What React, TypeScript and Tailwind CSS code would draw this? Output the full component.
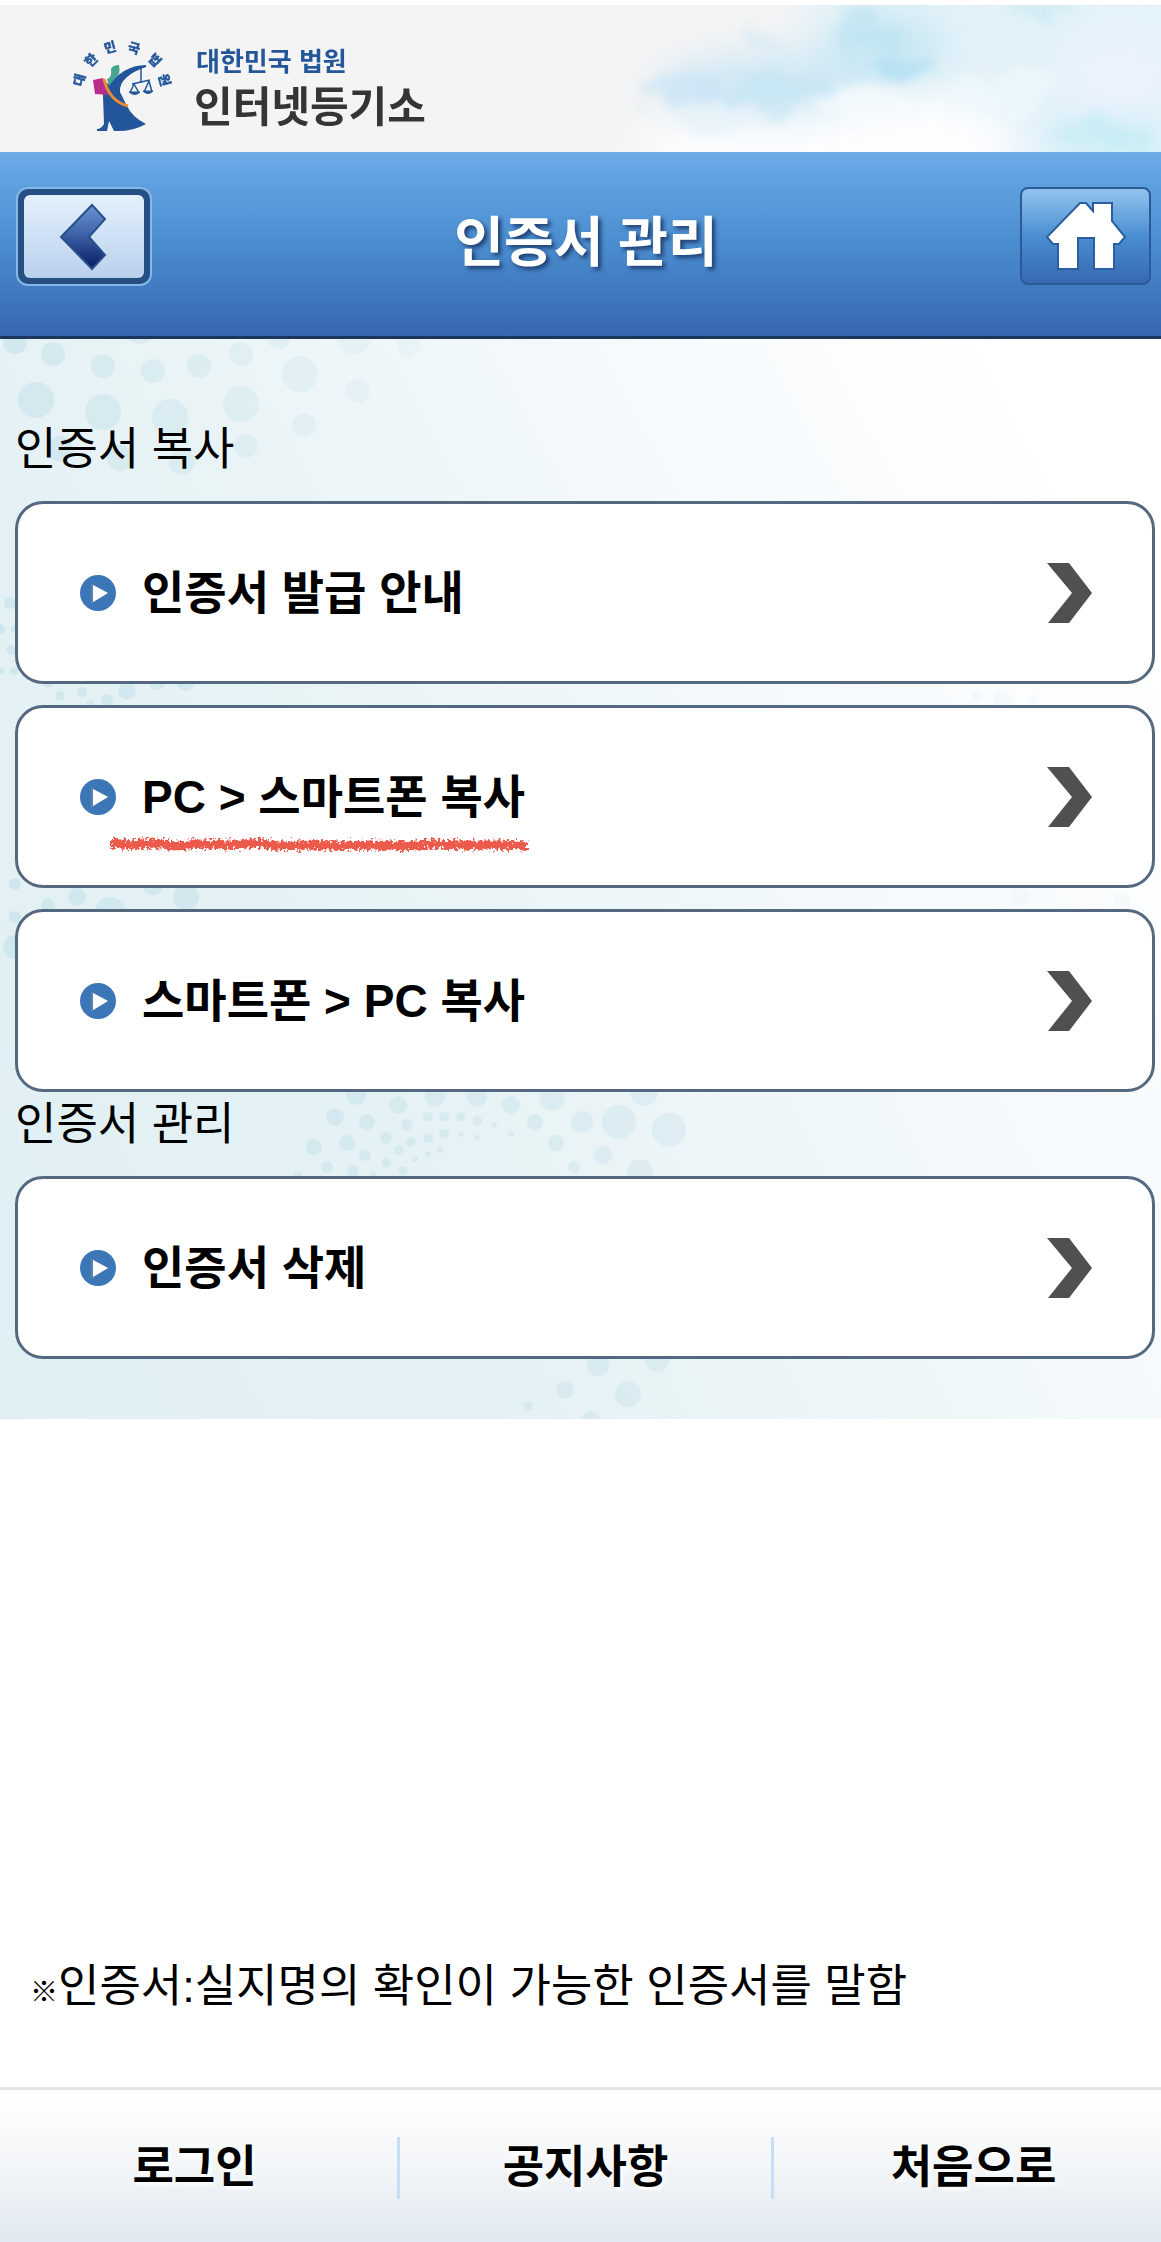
import React from "react";

type Dot = [number, number, number];

const DOTS: Dot[] = [
  [15, 3, 12], [53, 15, 12], [103, 27, 12], [153, 32, 12], [199, 27, 12], [241, 15, 12],
  [140, -8, 13], [279, -2, 12], [354, -1, 17], [409, 6, 12], [300, 35, 18], [36, 61, 18],
  [103, 73, 18], [170, 78, 18], [241, 65, 18], [358, 52, 12], [304, 86, 12], [246, 107, 12],
  [60, 110, 13], [120, 119, 13], [182, 123, 13], [10, 264, 6], [0, 290, 5], [15, 290, 4],
  [11, 311, 5], [14, 332, 4], [0, 332, 4], [48, 344, 5], [60, 357, 5], [82, 353, 5],
  [90, 365, 4], [107, 361, 6], [127, 352, 9], [157, 342, 9], [186, 343, 9], [15, 545, 6],
  [15, 578, 6], [48, 567, 7], [77, 558, 9], [110, 573, 15], [153, 545, 11], [186, 558, 13],
  [15, 608, 12], [356, 756, 10], [398, 766, 9], [435, 758, 10], [477, 758, 10], [511, 766, 9],
  [552, 758, 13], [644, 753, 14], [335, 778, 9], [367, 783, 8], [407, 786, 6], [428, 778, 5],
  [444, 778, 5], [461, 778, 5], [477, 782, 5], [494, 786, 3], [511, 795, 3], [535, 783, 8],
  [582, 783, 11], [619, 783, 17], [669, 791, 17], [314, 808, 8], [347, 804, 8], [386, 799, 6],
  [411, 803, 5], [428, 799, 5], [444, 795, 5], [461, 795, 3], [477, 799, 3], [556, 804, 8],
  [603, 816, 9], [640, 833, 13], [574, 828, 6], [365, 816, 6], [399, 811, 5], [440, 811, 3],
  [428, 815, 3], [415, 820, 3], [386, 824, 5], [403, 832, 5], [327, 828, 6], [353, 832, 6],
  [298, 837, 4], [373, 836, 4], [598, 1026, 11], [657, 1021, 12], [565, 1051, 9],
  [628, 1055, 13], [528, 1067, 5], [591, 1081, 9],
];

const FAINT_DOTS: Dot[] = [
  [977, 357, 5], [1002, 360, 9], [1034, 360, 4], [1019, 558, 10], [1122, 561, 8],
];

function DotPattern() {
  return (
    <svg className="pointer-events-none absolute left-0 top-0" width="1161" height="1080" aria-hidden="true">
      <defs>
        <linearGradient id="dots" gradientUnits="userSpaceOnUse" x1="0" y1="0" x2="700" y2="0">
          <stop offset="0" stopColor="#8fc9d8" stopOpacity="0.24" />
          <stop offset="1" stopColor="#9fcbe0" stopOpacity="0.18" />
        </linearGradient>
      </defs>
      <g fill="url(#dots)">
        {DOTS.map(([x, y, r]) => (
          <circle key={`${x}-${y}`} cx={x} cy={y} r={r} opacity={y < 140 ? 1 - x / 700 : 1} />
        ))}
      </g>
      <g fill="#8fc9d8" opacity="0.05">
        {FAINT_DOTS.map(([x, y, r]) => (
          <circle key={`${x}-${y}`} cx={x} cy={y} r={r} />
        ))}
      </g>
    </svg>
  );
}

function Clouds() {
  return (
    <svg className="pointer-events-none absolute right-0 top-0" width="601" height="147" viewBox="0 0 601 147" aria-hidden="true">
      <defs>
        <linearGradient id="sky" x1="0" x2="1">
          <stop offset="0" stopColor="#f4f4f4" />
          <stop offset="0.3" stopColor="#f0f3f5" />
          <stop offset="0.5" stopColor="#e2f1f7" />
          <stop offset="1" stopColor="#e4f2fa" />
        </linearGradient>
        <filter id="cloud" filterUnits="userSpaceOnUse" x="-60" y="-60" width="740" height="280">
          <feTurbulence type="fractalNoise" baseFrequency="0.025" numOctaves="4" seed="4" />
          <feDisplacementMap in="SourceGraphic" scale="50" xChannelSelector="R" yChannelSelector="G" />
          <feGaussianBlur stdDeviation="5" />
        </filter>
        <filter id="haze" filterUnits="userSpaceOnUse" x="-60" y="-60" width="740" height="280">
          <feGaussianBlur stdDeviation="18" />
        </filter>
      </defs>
      <rect width="601" height="147" fill="url(#sky)" />
      <g filter="url(#haze)">
        <path d="M-60 -60H260L230 25L60 55L50 100L130 147L-30 220Z" fill="#f4f4f4" />
        <ellipse cx="210" cy="80" rx="110" ry="30" fill="#cfe8f5" />
        <ellipse cx="325" cy="45" rx="60" ry="36" fill="#c8e8f4" />
        <path d="M90 122L180 110L240 112L300 92L380 84L450 110L470 200H80Z" fill="#fbfdfe" />
        <ellipse cx="550" cy="135" rx="60" ry="22" fill="#cdeff6" />
        <ellipse cx="560" cy="75" rx="50" ry="34" fill="#edf2fd" />
      </g>
      <g filter="url(#cloud)">
        <ellipse cx="125" cy="84" rx="46" ry="11" fill="#c6e3f6" opacity="0.6" />
        <ellipse cx="215" cy="88" rx="58" ry="20" fill="#bfe3f3" opacity="0.5" />
        <ellipse cx="200" cy="36" rx="14" ry="10" fill="#cfe7f5" opacity="0.5" />
        <ellipse cx="305" cy="28" rx="34" ry="18" fill="#b8e1f1" opacity="0.5" />
        <ellipse cx="350" cy="62" rx="30" ry="12" fill="#a9dbf2" opacity="0.6" />
        <ellipse cx="480" cy="6" rx="34" ry="8" fill="#bfe9ef" opacity="0.6" />
        <ellipse cx="160" cy="112" rx="46" ry="12" fill="#e6f2f9" opacity="0.7" />
        <ellipse cx="300" cy="100" rx="50" ry="14" fill="#f6fbfd" opacity="0.8" />
        <ellipse cx="440" cy="90" rx="50" ry="20" fill="#f0fafd" opacity="0.6" />
        <ellipse cx="530" cy="130" rx="50" ry="10" fill="#c0ecf3" opacity="0.5" />
      </g>
    </svg>
  );
}

const EMBLEM_TEXT: [string, number, number, number][] = [
  ["대", 79, 80, -75],
  ["한", 91, 60, -45],
  ["민", 110, 47, -15],
  ["국", 134, 48, 15],
  ["법", 155, 60, 45],
  ["원", 165, 80, 75],
];

function Emblem() {
  return (
    <svg className="shrink-0" width="104" height="94" viewBox="70 40 104 94" aria-hidden="true">
      <g fill="#24579a" stroke="#24579a" strokeWidth="0.6" fontSize="13" fontWeight="700" textAnchor="middle">
        {EMBLEM_TEXT.map(([char, x, y, angle]) => (
          <text key={char} x={x} y={y} dy="5" transform={`rotate(${angle} ${x} ${y})`}>
            {char}
          </text>
        ))}
      </g>
      <path
        d="M146 65Q134 65 124 71Q115 77 108 84L103 79V96L104 124Q101 129 97 129V131H107L109 121L114 131Q132 132 146 124Q132 117 127 106L120 92Q119 84 127 77Q134 71 146 67Z"
        fill="#22559a"
      />
      <path d="M93 80L103 78L108 95L95 94Z" fill="#b92c8c" />
      <path d="M111 69Q113 65 119 65Q120 70 119 74L116 77L109 86L107 79Q112 78 111 69Z" fill="#45a58e" />
      <path d="M104 79Q109 101 128 106" fill="none" stroke="#ee8b32" strokeWidth="3" />
      <g fill="none" stroke="#22559a" strokeWidth="1.5">
        <path d="M141 67V83M132 84L150 80M134 84L130 93M134 84L139 93M149 81L144 92M149 81L152 92" />
      </g>
      <path d="M129 92H140Q135 97 129 92ZM143 91H153Q148 96 143 91Z" fill="#22559a" stroke="#22559a" />
    </svg>
  );
}

function BackIcon() {
  return (
    <svg width="50" height="68" viewBox="0 0 50 68" aria-hidden="true">
      <defs>
        <linearGradient id="back-fill" x1="0" y1="0" x2="0" y2="1">
          <stop offset="0" stopColor="#6a96d4" />
          <stop offset="0.45" stopColor="#3f62a8" />
          <stop offset="1" stopColor="#061a60" />
        </linearGradient>
      </defs>
      <path d="M2 34L33 2L46 16L30 34L46 52L33 66Z" fill="url(#back-fill)" stroke="#28508c" strokeWidth="2" />
    </svg>
  );
}

function HomeIcon() {
  return (
    <svg width="84" height="70" viewBox="0 0 84 70" aria-hidden="true">
      <path
        d="M36 2H42L49 10V2H68V20L81 36L75 43H70V68H50V37H34V68H14V43H9L3 36Z"
        fill="#fff"
        stroke="#2c5f9f"
        strokeWidth="2"
      />
    </svg>
  );
}

function PlayIcon() {
  return (
    <svg className="shrink-0" width="36" height="36" viewBox="0 0 36 36" aria-hidden="true">
      <circle cx="18" cy="18" r="18" fill="#3b76b6" />
      <path d="M11 8L29 18L11 29Z" fill="#6d87a8" opacity="0.7" />
      <path d="M13 10L28 18L13 27Z" fill="#fff" />
    </svg>
  );
}

function ChevronIcon() {
  return (
    <svg className="ml-auto shrink-0" width="45" height="62" viewBox="0 0 45 62" aria-hidden="true">
      <path d="M0 1H22L45 31L22 61H1L25 31Z" fill="#505050" />
    </svg>
  );
}

function CrayonLine() {
  return (
    <svg
      className="pointer-events-none absolute -left-8 top-[70px] h-4 w-[418px] overflow-visible"
      viewBox="0 0 418 16"
      aria-hidden="true"
    >
      <defs>
        <filter id="crayon" filterUnits="userSpaceOnUse" x="-10" y="-10" width="440" height="36">
          <feTurbulence type="fractalNoise" baseFrequency="0.35" numOctaves="2" seed="7" />
          <feDisplacementMap in="SourceGraphic" scale="11" xChannelSelector="R" yChannelSelector="G" />
        </filter>
      </defs>
      <path
        d="M1 6L22 8L42 6L66 9L90 7L120 8L152 6L166 9L196 8L226 9L262 8L292 9L322 7L352 8L388 8L417 9"
        fill="none"
        stroke="#ec5a4c"
        strokeWidth="9"
        filter="url(#crayon)"
      />
    </svg>
  );
}

function MenuCard({ label, marked = false }: { label: string; marked?: boolean }) {
  return (
    <li>
      <a
        href="#"
        className="flex h-[183px] items-center rounded-[28px] border-3 border-[#54687f] bg-white pl-[62px] pr-[60px] text-[46px] font-bold leading-[60px] text-black"
      >
        <PlayIcon />
        <span className="relative ml-[26px] whitespace-nowrap">
          {label}
          {marked && <CrayonLine />}
        </span>
        <ChevronIcon />
      </a>
    </li>
  );
}

const HEADING = "mb-[21px] pt-[3px] text-[45px] leading-[60px] font-normal text-black";

export default function App() {
  return (
    <div
      lang="ko"
      className="flex min-h-screen flex-col bg-white font-['Liberation_Sans','Noto_Sans_CJK_KR',sans-serif]"
    >
      <div className="relative mt-[5px] h-[147px] overflow-hidden bg-[#f4f4f4]">
        <Clouds />
        <a href="#" className="relative flex h-full items-start gap-5 pl-[70px] pt-[35px]">
          <Emblem />
          <span className="flex flex-col whitespace-nowrap pt-0.5 font-bold">
            <span className="pl-0.5 text-[26px] leading-[40px] text-[#24579a]">대한민국 법원</span>
            <span className="text-[42px] leading-[52px] text-[#353535]">인터넷등기소</span>
          </span>
        </a>
      </div>

      <header className="flex h-[187px] items-start border-b-3 border-[#1b365d] bg-linear-to-b from-[#6aabe8] via-[#4a8dcf] to-[#3866b0] pl-4 pr-[10px] pt-[35px]">
        <button
          type="button"
          aria-label="뒤로"
          className="flex h-[99px] w-[136px] items-center justify-center rounded-xl border-2 border-[#83b8e8] bg-[#264f84] p-1.5"
        >
          <span className="flex h-full w-full items-center justify-center rounded-md bg-linear-to-b from-[#e4f1fd] to-[#b9d0ec]">
            <BackIcon />
          </span>
        </button>
        <h1 className="flex-1 pt-[22px] text-center text-[54px] font-bold leading-[68px] text-white [text-shadow:3px_3px_4px_#1f3f70]">
          인증서 관리
        </h1>
        <button
          type="button"
          aria-label="홈"
          className="flex h-[98px] w-[131px] items-center justify-center rounded-lg border-2 border-[#2a5a98] bg-linear-to-b from-[#93c3ee] via-[#4a8ed2] to-[#3769b2]"
        >
          <HomeIcon />
        </button>
      </header>

      <main className="flex flex-1 flex-col">
        <div className="relative overflow-hidden bg-[linear-gradient(62deg,#dfeff3_0%,#e6f2f5_35%,#f4f9fb_66%,#ffffff_92%)] pb-[60px] pl-[15px] pr-[6px] pt-[78px]">
          <DotPattern />
          <section className="relative">
            <h2 className={HEADING}>인증서 복사</h2>
            <ul className="flex flex-col gap-[21px]">
              <MenuCard label="인증서 발급 안내" />
              <MenuCard label="PC &gt; 스마트폰 복사" marked />
              <MenuCard label="스마트폰 &gt; PC 복사" />
            </ul>
          </section>
          <section className="relative">
            <h2 className={HEADING}>인증서 관리</h2>
            <ul>
              <MenuCard label="인증서 삭제" />
            </ul>
          </section>
        </div>
        <p className="mt-auto px-[30px] pb-16 text-[45px] leading-[60px] text-black">
          <span className="text-[28px] font-bold">※</span>인증서:실지명의 확인이 가능한 인증서를 말함
        </p>
      </main>

      <footer className="border-t-3 border-[#e0e6e6] bg-linear-to-b from-white via-[#f3f6f8] to-[#e1e8f1]">
        <nav className="grid h-[152px] grid-cols-[400fr_374fr_387fr] items-center pt-1 text-center text-[45px] font-bold leading-[62px] text-black [text-shadow:2px_3px_4px_#ffffff]">
          <a href="#" className="border-r-3 border-[#c5dff6] pr-2">로그인</a>
          <a href="#" className="border-r-3 border-[#c5dff6]">공지사항</a>
          <a href="#" className="pl-3">처음으로</a>
        </nav>
      </footer>
    </div>
  );
}
